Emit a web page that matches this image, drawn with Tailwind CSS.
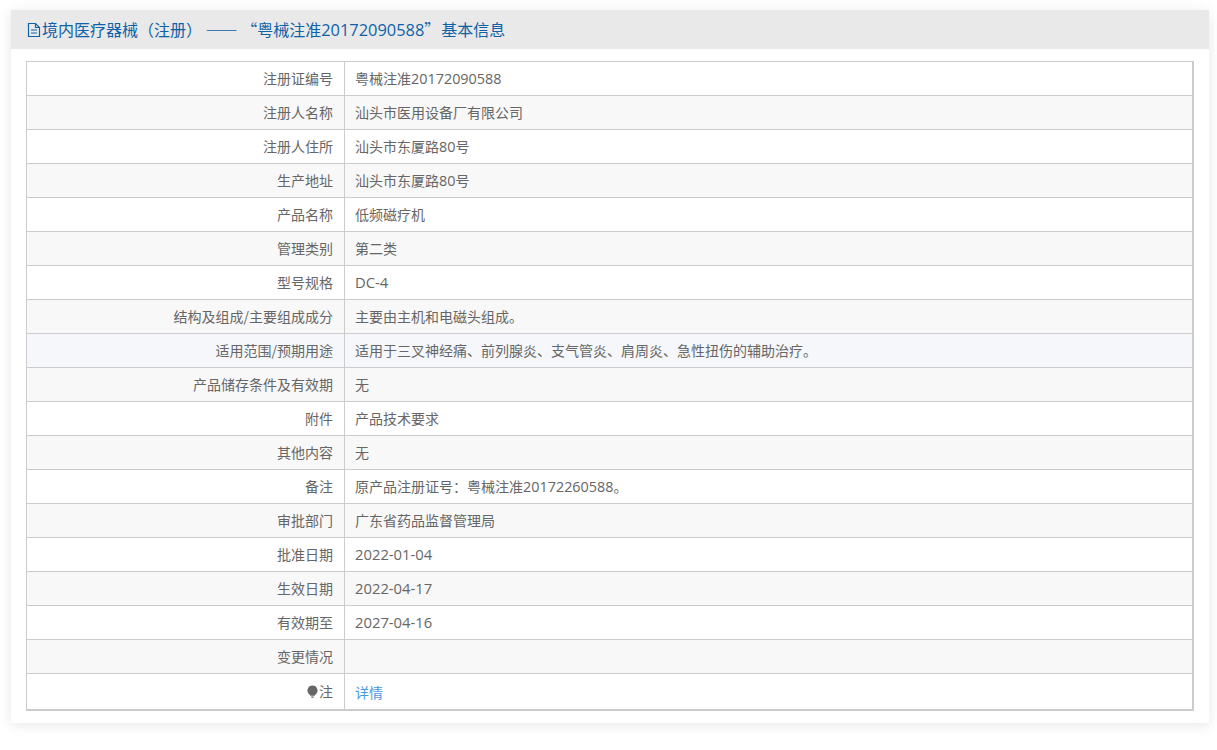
<!DOCTYPE html>
<html lang="zh-CN">

<head>
  <meta charset="UTF-8">
  <title>境内医疗器械（注册）基本信息</title>
  <script src="https://cdn.jsdelivr.net/npm/@tailwindcss/browser@4"></script>
</head>

<body class="min-h-screen bg-white font-['Noto_Sans_CJK_SC',sans-serif] text-[14px] text-[#666]">
  <div class="pt-[10px] pl-[11px] pr-[8px]">
    <section class="bg-white pb-[12px] shadow-[0_2px_12px_rgba(0,0,0,0.1)]">
      <h2 class="flex h-[39px] items-center bg-[#e9e9e9] pl-[15px] text-[16px] font-normal text-[#0f62a8]">
        <svg class="h-[16px] w-[16px]" viewBox="0 0 16 16" fill="none" stroke="currentColor" stroke-width="1.200">
          <path d="M2.500 1.500h7l4 4v9h-11z" />
          <path d="M9.500 1.500v4h4M5 8h6M5 11h6" />
        </svg>
        <span class="whitespace-pre">境内医疗器械（注册） —— “粤械注准<span class="font-['Open_Sans'] text-[16.400px]">20172090588</span>”<span class="ml-[1px]">基本信息</span></span>
      </h2>
      <div class="px-[15px] pt-[12px]">
        <div class="border-r border-b border-[#ccc]">
          <table class="w-full table-fixed border-collapse">
            <colgroup>
              <col class="w-[318px]">
              <col>
            </colgroup>
            <tbody>
              <tr class="h-[34px]">
                <th class="border border-[#ccc] pr-[11px] text-right font-normal">注册证编号</th>
                <td class="border border-[#ccc] pl-[10px]">粤械注准<span class="font-['Open_Sans'] text-[14.400px]">20172090588</span></td>
              </tr>
              <tr class="h-[34px] bg-[#f8f8f8]">
                <th class="border border-[#ccc] pr-[11px] text-right font-normal">注册人名称</th>
                <td class="border border-[#ccc] pl-[10px]">汕头市医用设备厂有限公司</td>
              </tr>
              <tr class="h-[34px]">
                <th class="border border-[#ccc] pr-[11px] text-right font-normal">注册人住所</th>
                <td class="border border-[#ccc] pl-[10px]">汕头市东厦路<span class="font-['Open_Sans'] text-[14.400px]">80</span>号</td>
              </tr>
              <tr class="h-[34px] bg-[#f8f8f8]">
                <th class="border border-[#ccc] pr-[11px] text-right font-normal">生产地址</th>
                <td class="border border-[#ccc] pl-[10px]">汕头市东厦路<span class="font-['Open_Sans'] text-[14.400px]">80</span>号</td>
              </tr>
              <tr class="h-[34px]">
                <th class="border border-[#ccc] pr-[11px] text-right font-normal">产品名称</th>
                <td class="border border-[#ccc] pl-[10px]">低频磁疗机</td>
              </tr>
              <tr class="h-[34px] bg-[#f8f8f8]">
                <th class="border border-[#ccc] pr-[11px] text-right font-normal">管理类别</th>
                <td class="border border-[#ccc] pl-[10px]">第二类</td>
              </tr>
              <tr class="h-[34px]">
                <th class="border border-[#ccc] pr-[11px] text-right font-normal">型号规格</th>
                <td class="border border-[#ccc] pl-[10px] font-['Open_Sans'] text-[14.800px]">DC-4</td>
              </tr>
              <tr class="h-[34px] bg-[#f8f8f8]">
                <th class="border border-[#ccc] pr-[11px] text-right font-normal">结构及组成/主要组成成分</th>
                <td class="border border-[#ccc] pl-[10px]">主要由主机和电磁头组成。</td>
              </tr>
              <tr class="h-[34px] bg-[#f5f7fb]">
                <th class="border border-[#ccc] pr-[11px] text-right font-normal">适用范围/预期用途</th>
                <td class="border border-[#ccc] pl-[10px]">适用于三叉神经痛、前列腺炎、支气管炎、肩周炎、急性扭伤的辅助治疗。</td>
              </tr>
              <tr class="h-[34px] bg-[#f8f8f8]">
                <th class="border border-[#ccc] pr-[11px] text-right font-normal">产品储存条件及有效期</th>
                <td class="border border-[#ccc] pl-[10px]">无</td>
              </tr>
              <tr class="h-[34px]">
                <th class="border border-[#ccc] pr-[11px] text-right font-normal">附件</th>
                <td class="border border-[#ccc] pl-[10px]">产品技术要求</td>
              </tr>
              <tr class="h-[34px] bg-[#f8f8f8]">
                <th class="border border-[#ccc] pr-[11px] text-right font-normal">其他内容</th>
                <td class="border border-[#ccc] pl-[10px]">无</td>
              </tr>
              <tr class="h-[34px]">
                <th class="border border-[#ccc] pr-[11px] text-right font-normal">备注</th>
                <td class="border border-[#ccc] pl-[10px]">原产品注册证号：粤械注准<span class="font-['Open_Sans'] text-[14.400px]">20172260588</span>。</td>
              </tr>
              <tr class="h-[34px] bg-[#f8f8f8]">
                <th class="border border-[#ccc] pr-[11px] text-right font-normal">审批部门</th>
                <td class="border border-[#ccc] pl-[10px]">广东省药品监督管理局</td>
              </tr>
              <tr class="h-[34px]">
                <th class="border border-[#ccc] pr-[11px] text-right font-normal">批准日期</th>
                <td class="border border-[#ccc] pl-[10px] font-['Open_Sans'] text-[14.800px]">2022-01-04</td>
              </tr>
              <tr class="h-[34px] bg-[#f8f8f8]">
                <th class="border border-[#ccc] pr-[11px] text-right font-normal">生效日期</th>
                <td class="border border-[#ccc] pl-[10px] font-['Open_Sans'] text-[14.800px]">2022-04-17</td>
              </tr>
              <tr class="h-[34px]">
                <th class="border border-[#ccc] pr-[11px] text-right font-normal">有效期至</th>
                <td class="border border-[#ccc] pl-[10px] font-['Open_Sans'] text-[14.800px]">2027-04-16</td>
              </tr>
              <tr class="h-[34px] bg-[#f8f8f8]">
                <th class="border border-[#ccc] pr-[11px] text-right font-normal">变更情况</th>
                <td class="border border-[#ccc] pl-[10px]"></td>
              </tr>
              <tr class="h-[36px]">
                <th class="border border-[#ccc] pr-[11px] text-right font-normal">
                  <span class="inline-flex items-center gap-[1px]">
                    <svg class="h-[13px] w-[11px]" viewBox="0 0 11 13" fill="#666">
                      <path d="M5.500 0.500a5 5 0 0 1 3 9c-.6.5-.8 1-.9 1.300H3.400c-.1-.3-.3-.8-.9-1.300a5 5 0 0 1 3-9z" />
                      <path d="M4 11.500h3l-.5 1.200h-2z" />
                    </svg>
                    注
                  </span>
                </th>
                <td class="border border-[#ccc] pt-[2px] pl-[10px] text-[#4a98e0]"><a href="#">详情</a></td>
              </tr>
            </tbody>
          </table>
        </div>
      </div>
    </section>
  </div>
</body>

</html>
